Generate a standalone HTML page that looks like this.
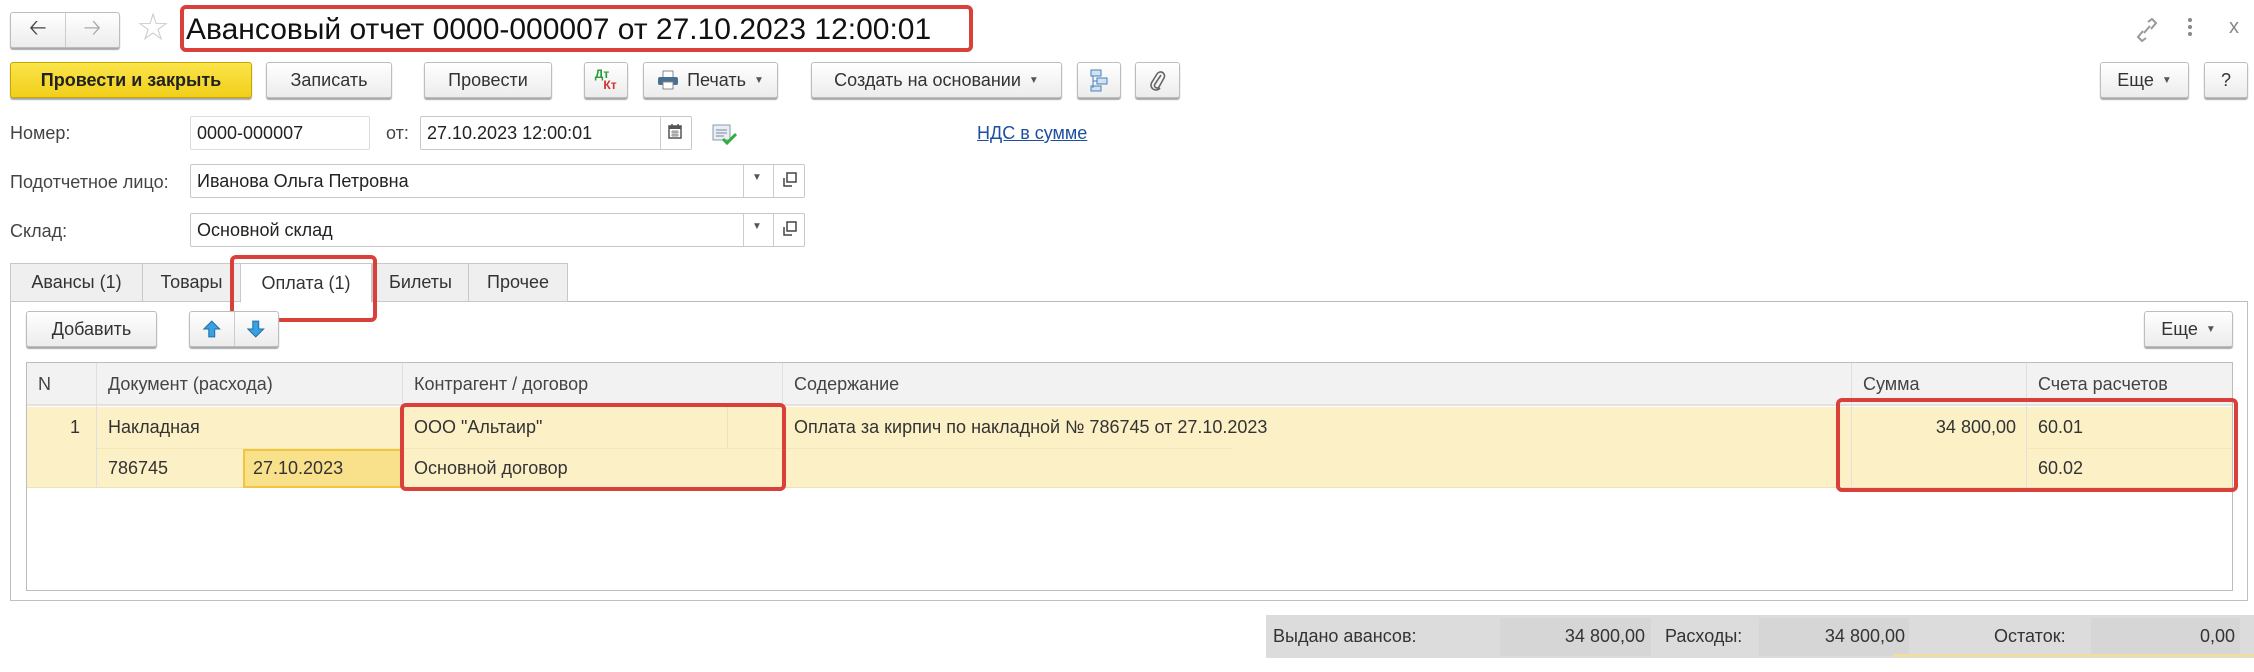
<!DOCTYPE html>
<html><head><meta charset="utf-8"><style>
*{box-sizing:border-box;margin:0;padding:0}
body{width:2254px;height:672px;background:#fff;position:relative;overflow:hidden;font-family:"Liberation Sans",Arial,sans-serif;font-size:18px;color:#333}
.a{position:absolute}
.btn{position:absolute;border:1px solid #bdbdbd;border-radius:3px;background:linear-gradient(#fff,#ececec);box-shadow:0 2px 1px #a8a8a8;display:flex;align-items:center;justify-content:center;color:#333;font-size:18px}
.inp{position:absolute;border:1px solid #c8c8c8;border-radius:2px;background:#fff;display:flex;align-items:center;padding-left:6px;font-size:18px;color:#222}
.lbl{position:absolute;font-size:18px;color:#444}
.red{position:absolute;border:4px solid #d9403a;border-radius:6px}
.tab{position:absolute;top:263px;height:39px;border:1px solid #c8c8c8;background:#efefef;display:flex;align-items:center;justify-content:center;font-size:18px;color:#333}
.th{position:absolute;top:363px;height:43px;display:flex;align-items:center;font-size:18px;color:#444}
.td{position:absolute;font-size:18px;color:#333;display:flex;align-items:center}
.vs{position:absolute;width:1px;background:#e0e0e0}
.arr{font-size:10px;color:#555;margin-left:8px}
</style></head><body>

<!-- nav -->
<div class="btn" style="left:10px;top:12px;width:110px;height:36px;justify-content:flex-start">
 <span style="width:54px;text-align:center;font-size:22px;color:#444">&#129120;</span><span style="width:1px;height:34px;background:#ccc"></span><span style="width:54px;text-align:center;font-size:22px;color:#aaa">&#129122;</span>
</div>
<div class="a" style="left:136px;top:8px;font-size:38px;color:#ccc;line-height:40px">☆</div>
<div class="a" style="left:186px;top:10px;font-size:30px;color:#111;line-height:40px">Авансовый отчет 0000-000007 от 27.10.2023 12:00:01</div>
<div class="red" style="left:180px;top:5px;width:793px;height:47px"></div>
<svg class="a" style="left:2136px;top:18px" width="22" height="24" viewBox="0 0 22 24"><path d="M12 4 l4-3 4 4-5 6 M10 20 l-4 3-4-4 5-6 M8 15 l6-7" stroke="#999" stroke-width="2" fill="none"/></svg>
<div class="a" style="left:2188px;top:18px;width:4px;height:4px;background:#888;border-radius:2px;box-shadow:0 7px #888,0 14px #888"></div>
<div class="a" style="left:2229px;top:16px;font-size:20px;color:#888">x</div>

<!-- toolbar -->
<div class="btn" style="left:10px;top:62px;width:242px;height:36px;background:linear-gradient(#fbe44a,#f1cf1a);border-color:#c7a600;color:#222;font-weight:bold">Провести и закрыть</div>
<div class="btn" style="left:266px;top:62px;width:126px;height:36px">Записать</div>
<div class="btn" style="left:424px;top:62px;width:128px;height:36px">Провести</div>
<div class="btn" style="left:584px;top:62px;width:44px;height:36px;font-size:12px;font-weight:bold;line-height:11px;flex-direction:column"><span style="color:#2a9a3a;margin-left:-8px">Дт</span><span style="color:#d03030;margin-left:8px">Кт</span></div>
<div class="btn" style="left:643px;top:62px;width:135px;height:36px"><svg width="22" height="20" viewBox="0 0 22 20" style="margin-right:8px"><rect x="6" y="1" width="10" height="7" fill="#fff" stroke="#888"/><rect x="1" y="7" width="20" height="8" rx="2" fill="#4a6f95"/><rect x="6" y="12" width="10" height="7" fill="#fff" stroke="#888"/></svg>Печать<span class="arr">▼</span></div>
<div class="btn" style="left:811px;top:62px;width:251px;height:36px">Создать на основании<span class="arr">▼</span></div>
<div class="btn" style="left:1077px;top:62px;width:44px;height:36px"><svg width="20" height="24" viewBox="0 0 20 24"><rect x="2" y="2" width="10" height="6" fill="#cfe3f5" stroke="#4a7fb5"/><rect x="8" y="10" width="10" height="6" fill="#cfe3f5" stroke="#4a7fb5"/><rect x="2" y="18" width="10" height="5" fill="#cfe3f5" stroke="#4a7fb5"/><path d="M4 8v12M4 13h4" stroke="#4a7fb5" fill="none"/></svg></div>
<div class="btn" style="left:1135px;top:62px;width:45px;height:36px"><svg width="16" height="22" viewBox="0 0 16 22"><path d="M11 6 L5 15 a2.5 2.5 0 0 0 4 3 L14 9 a4 4 0 0 0-7-4 L2 13 a5 5 0 0 0 8 6" stroke="#666" stroke-width="1.6" fill="none"/></svg></div>
<div class="btn" style="left:2100px;top:62px;width:89px;height:36px">Еще<span class="arr">▼</span></div>
<div class="btn" style="left:2204px;top:62px;width:44px;height:36px">?</div>

<!-- fields -->
<div class="lbl" style="left:10px;top:123px">Номер:</div>
<div class="inp" style="left:190px;top:116px;width:180px;height:34px;border-color:#ddd">0000-000007</div>
<div class="lbl" style="left:386px;top:123px">от:</div>
<div class="inp" style="left:420px;top:116px;width:272px;height:34px">27.10.2023 12:00:01</div>
<div class="a" style="left:660px;top:117px;width:1px;height:32px;background:#ccc"></div>
<svg class="a" style="left:668px;top:123px" width="14" height="16" viewBox="0 0 14 16"><rect x="1" y="3" width="12" height="12" fill="none" stroke="#555" stroke-width="1.5"/><rect x="1" y="3" width="12" height="3" fill="#555"/><path d="M4 1v3M10 1v3" stroke="#555" stroke-width="1.5"/><path d="M3 9h8M3 12h8M5 7v7M7 7v7M9 7v7" stroke="#777" stroke-width=".8"/></svg>
<svg class="a" style="left:712px;top:120px" width="26" height="26" viewBox="0 0 26 26"><rect x="1" y="5" width="17" height="15" fill="#e8eef4" stroke="#8a9bb0"/><path d="M4 10h11M4 13h11M4 16h8" stroke="#7a8aa0"/><path d="M11 19 l4 4 9-9" stroke="#2fae3a" stroke-width="3" fill="none"/></svg>
<div class="a" style="left:977px;top:123px;color:#1d4fa0;text-decoration:underline;font-size:18px">НДС в сумме</div>

<div class="lbl" style="left:10px;top:172px">Подотчетное лицо:</div>
<div class="inp" style="left:190px;top:164px;width:615px;height:34px">Иванова Ольга Петровна</div>
<div class="a" style="left:743px;top:165px;width:1px;height:32px;background:#ccc"></div>
<div class="a" style="left:773px;top:165px;width:1px;height:32px;background:#ccc"></div>
<div class="a" style="left:752px;top:172px;font-size:10px;color:#555">▼</div>
<svg class="a" style="left:782px;top:172px" width="16" height="16" viewBox="0 0 16 16"><rect x="5" y="1" width="9" height="9" fill="none" stroke="#444" stroke-width="1.5"/><path d="M2 6v8h8" stroke="#444" stroke-width="1.5" fill="none"/></svg>

<div class="lbl" style="left:10px;top:221px">Склад:</div>
<div class="inp" style="left:190px;top:213px;width:615px;height:34px">Основной склад</div>
<div class="a" style="left:743px;top:214px;width:1px;height:32px;background:#ccc"></div>
<div class="a" style="left:773px;top:214px;width:1px;height:32px;background:#ccc"></div>
<div class="a" style="left:752px;top:221px;font-size:10px;color:#555">▼</div>
<svg class="a" style="left:782px;top:221px" width="16" height="16" viewBox="0 0 16 16"><rect x="5" y="1" width="9" height="9" fill="none" stroke="#444" stroke-width="1.5"/><path d="M2 6v8h8" stroke="#444" stroke-width="1.5" fill="none"/></svg>

<!-- panel -->
<div class="a" style="left:10px;top:301px;width:2238px;height:300px;border:1px solid #c0c0c0;border-top-color:#bbb"></div>
<div class="tab" style="left:10px;width:133px">Авансы (1)</div>
<div class="tab" style="left:142px;width:99px">Товары</div>
<div class="tab" style="left:240px;width:132px;background:#fff;border-bottom-color:#fff;height:40px">Оплата (1)</div>
<div class="tab" style="left:372px;width:97px">Билеты</div>
<div class="tab" style="left:468px;width:100px">Прочее</div>
<div class="red" style="left:230px;top:255px;width:147px;height:67px"></div>

<div class="btn" style="left:26px;top:311px;width:131px;height:36px">Добавить</div>
<div class="btn" style="left:189px;top:311px;width:90px;height:36px;justify-content:flex-start">
 <svg width="44" height="24" viewBox="0 0 44 24"><path d="M22 4 l-8 8h5v8h6v-8h5z" fill="#3aa0e0" stroke="#1d6fa8"/></svg><span style="width:1px;height:34px;background:#ccc"></span><svg width="44" height="24" viewBox="0 0 44 24"><path d="M22 20 l-8-8h5V4h6v8h5z" fill="#3aa0e0" stroke="#1d6fa8"/></svg>
</div>
<div class="btn" style="left:2144px;top:311px;width:89px;height:36px">Еще<span class="arr">▼</span></div>

<!-- table -->
<div class="a" style="left:26px;top:362px;width:2207px;height:229px;border:1px solid #bcbcbc"></div>
<div class="a" style="left:27px;top:363px;width:2205px;height:43px;background:#f2f2f2;border-bottom:2px solid #e2e2e2"></div>
<div class="a" style="left:27px;top:407px;width:2205px;height:81px;background:#fcf0c6;border-bottom:1px solid #ece2b8"></div>
<div class="a" style="left:96px;top:448px;width:1136px;height:1px;background:#f4e7b4"></div>
<div class="a" style="left:2026px;top:448px;width:206px;height:1px;background:#f4e7b4"></div>
<div class="a" style="left:243px;top:449px;width:159px;height:39px;background:#f9e08a;border:2px solid #efc63e"></div>
<div class="vs" style="left:96px;top:363px;height:125px"></div>
<div class="vs" style="left:402px;top:363px;height:125px"></div>
<div class="vs" style="left:782px;top:363px;height:125px"></div>
<div class="vs" style="left:1851px;top:363px;height:125px"></div>
<div class="vs" style="left:2026px;top:363px;height:125px"></div>
<div class="vs" style="left:727px;top:407px;height:41px;background:#efe3b5"></div>
<div class="th" style="left:38px">N</div>
<div class="th" style="left:108px">Документ (расхода)</div>
<div class="th" style="left:414px">Контрагент / договор</div>
<div class="th" style="left:794px">Содержание</div>
<div class="th" style="left:1863px">Сумма</div>
<div class="th" style="left:2038px">Счета расчетов</div>
<div class="td" style="left:70px;top:407px;height:41px">1</div>
<div class="td" style="left:108px;top:407px;height:41px">Накладная</div>
<div class="td" style="left:108px;top:448px;height:40px">786745</div>
<div class="td" style="left:253px;top:448px;height:40px">27.10.2023</div>
<div class="td" style="left:414px;top:407px;height:41px">ООО "Альтаир"</div>
<div class="td" style="left:414px;top:448px;height:40px">Основной договор</div>
<div class="td" style="left:794px;top:407px;height:41px">Оплата за кирпич по накладной № 786745 от 27.10.2023</div>
<div class="td" style="left:1851px;width:165px;justify-content:flex-end;top:407px;height:41px">34 800,00</div>
<div class="td" style="left:2038px;top:407px;height:41px">60.01</div>
<div class="td" style="left:2038px;top:448px;height:40px">60.02</div>
<div class="red" style="left:400px;top:403px;width:386px;height:88px"></div>
<div class="red" style="left:1836px;top:398px;width:402px;height:94px"></div>

<!-- totals -->
<div class="a" style="left:1266px;top:615px;width:988px;height:43px;background:#dcdcdc"></div>
<div class="a" style="left:1500px;top:618px;width:151px;height:38px;background:#d6d6d6"></div>
<div class="a" style="left:1759px;top:618px;width:150px;height:38px;background:#d6d6d6"></div>
<div class="a" style="left:2091px;top:618px;width:149px;height:38px;background:#d6d6d6"></div>
<div class="a" style="left:1893px;top:654px;width:361px;height:3px;background:#efe0a0"></div>
<div class="td" style="left:1273px;top:615px;height:43px;color:#333">Выдано авансов:</div>
<div class="td" style="left:1500px;width:145px;justify-content:flex-end;top:615px;height:43px">34 800,00</div>
<div class="td" style="left:1665px;top:615px;height:43px">Расходы:</div>
<div class="td" style="left:1759px;width:146px;justify-content:flex-end;top:615px;height:43px">34 800,00</div>
<div class="td" style="left:1994px;top:615px;height:43px">Остаток:</div>
<div class="td" style="left:2091px;width:144px;justify-content:flex-end;top:615px;height:43px">0,00</div>
</body></html>
